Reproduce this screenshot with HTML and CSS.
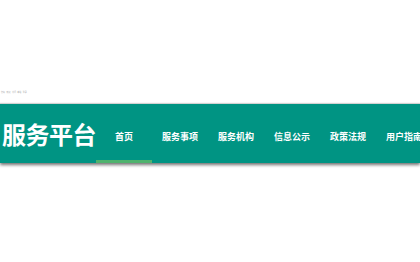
FILE: index.html
```html
<!DOCTYPE html>
<html lang="zh">
<head>
<meta charset="utf-8">
<title>服务平台</title>
<link rel="stylesheet" href="styles.css">
</head>
<body>
<div class="top">
  <div class="crumb">您好 欢迎 访问 本站 登录</div>
</div>
<header class="bar">
  <div class="title">服务平台</div>
  <nav class="nav">
    <a class="item active">首页</a>
    <a class="item">服务事项</a>
    <a class="item">服务机构</a>
    <a class="item">信息公示</a>
    <a class="item">政策法规</a>
    <a class="item">用户指南</a>
  </nav>
</header>
</body>
</html>
```
FILE: styles.css
```css
html, body {
  margin: 0;
  padding: 0;
  background: #ffffff;
  overflow: hidden;
}
body {
  width: 420px;
  height: 262px;
  font-family: "Noto Sans CJK SC", "Noto Sans", sans-serif;
}
.top {
  height: 104px;
  display: flex;
  align-items: flex-end;
}
.crumb {
  font-size: 2px;
  line-height: 4px;
  color: #a8a8a8;
  padding: 0 0 9px 1px;
  white-space: nowrap;
  word-spacing: 1px;
}
.bar {
  height: 59px;
  background: #009483;
  display: flex;
  align-items: stretch;
  box-shadow: 0 2px 3px rgba(0, 0, 0, 0.55), 0 -1px 1px rgba(0, 0, 0, 0.15);
  white-space: nowrap;
}
.title {
  width: 96px;
  padding-left: 2px;
  box-sizing: border-box;
  color: #ffffff;
  font-size: 24px;
  font-weight: 700;
  line-height: 59px;
  letter-spacing: -0.5px;
}
.nav {
  display: flex;
}
.item {
  width: 56px;
  flex: none;
  box-sizing: border-box;
  text-align: center;
  color: #ffffff;
  font-size: 9px;
  font-weight: 700;
  line-height: 59px;
  padding-top: 3px;
  border-bottom: 3px solid transparent;
}
.item.active {
  border-bottom-color: #4fb36e;
}
```
